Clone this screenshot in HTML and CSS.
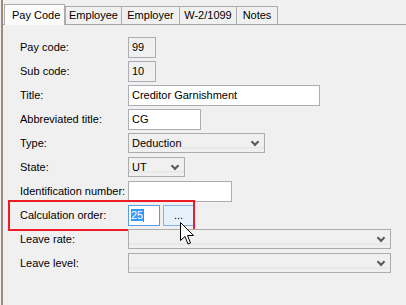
FILE: index.html
```html
<!DOCTYPE html>
<html lang="en">

<head>
    <meta charset="UTF-8">
    <title>Pay Code</title>
    <link rel="stylesheet" href="styles.css">
</head>

<body>
    <div class="window">
        <div class="tabs">
            <div class="tab active">Pay Code</div>
            <div class="tab t-employee">Employee</div>
            <div class="tab t-employer">Employer</div>
            <div class="tab t-w2">W-2/1099</div>
            <div class="tab t-notes">Notes</div>
        </div>

        <div class="panel">
            <div class="row">
                <label>Pay code:</label>
                <div class="field readonly w-small">99</div>
            </div>
            <div class="row">
                <label>Sub code:</label>
                <div class="field readonly w-small">10</div>
            </div>
            <div class="row">
                <label>Title:</label>
                <div class="field w-title">Creditor Garnishment</div>
            </div>
            <div class="row">
                <label>Abbreviated title:</label>
                <div class="field w-abbr">CG</div>
            </div>
            <div class="row">
                <label>Type:</label>
                <div class="select w-type">Deduction<span class="chevron"></span></div>
            </div>
            <div class="row">
                <label>State:</label>
                <div class="select w-state">UT<span class="chevron"></span></div>
            </div>
            <div class="row">
                <label>Identification number:</label>
                <div class="field w-id"></div>
            </div>
            <div class="row highlight-row">
                <label>Calculation order:</label>
                <div class="field focus w-calc"><span class="selected">25</span><span class="caret"></span></div>
                <button class="dots">...</button>
                <div class="highlight"></div>
                <svg class="cursor" width="15" height="24" viewBox="0 0 15 24">
                    <path d="M0.5 0.5 L0.5 18.5 L5 14.5 L8 22 L10.5 21 L7.5 13.5 L13.5 13.5 Z" fill="#fff" stroke="#000" stroke-width="1"/>
                </svg>
            </div>
            <div class="row">
                <label>Leave rate:</label>
                <div class="select w-wide"><span class="chevron"></span></div>
            </div>
            <div class="row">
                <label>Leave level:</label>
                <div class="select w-wide"><span class="chevron"></span></div>
            </div>
        </div>
    </div>
</body>

</html>
```

FILE: styles.css
```css
/* Page */
body {
    margin: 0;
    background-color: #f0f0f0;
    font-family: 'Liberation Sans', Arial, sans-serif;
    font-size: 11px;
    color: #000;
}

.window {
    height: 305px;
    margin-left: 1px;
    border-left: 2px solid #9c8a80;
    overflow: hidden;
}

/* Tabs */
.tabs {
    display: flex;
    align-items: flex-end;
    height: 24px;
    padding-left: 1px;
    border-bottom: 1px solid #a5a5a5;
    white-space: nowrap;
}

.tab {
    box-sizing: border-box;
    height: 18px;
    line-height: 17px;
    text-align: center;
    border: 1px solid #acacac;
    border-bottom: none;
    margin-left: -1px;
    background-color: #f0f0f0;
}

.t-employee { width: 57px; }
.t-employer { width: 59px; }
.t-w2 { width: 58px; }
.t-notes { width: 42px; }

.tab.active {
    position: relative;
    width: 61px;
    height: 21px;
    line-height: 20px;
    text-align: left;
    padding-left: 7px;
    margin-bottom: -1px;
    margin-left: 0;
    margin-right: 1px;
    background-color: #fcfcfc;
    z-index: 1;
}

/* Form */
.panel {
    display: flex;
    flex-direction: column;
    gap: 4px;
    padding: 12px 0 0 17px;
}

.row {
    display: flex;
    align-items: center;
    height: 20px;
    white-space: nowrap;
}

.row label {
    width: 108px;
}

.field {
    box-sizing: border-box;
    height: 21px;
    line-height: 19px;
    padding: 0 3px;
    border: 1px solid #abadb3;
    background-color: #fff;
}

.field.readonly {
    background-color: #f0f0f0;
}

.w-small { width: 28px; }
.w-title { width: 192px; }
.w-abbr { width: 73px; }
.w-id { width: 104px; }
.w-calc { width: 32px; }

.select {
    position: relative;
    box-sizing: border-box;
    height: 20px;
    line-height: 18px;
    padding: 0 3px;
    border: 1px solid #acacac;
    background: linear-gradient(#f0f0f0 70%, #e6e6e6 70%, #ebebeb 85%, #f0f0f0 85%);
}

.w-type { width: 137px; }
.w-state { width: 57px; }
.w-wide { width: 263px; }

.chevron {
    position: absolute;
    right: 6px;
    top: 5px;
    width: 4px;
    height: 4px;
    border-right: 2px solid #5a5a5a;
    border-bottom: 2px solid #5a5a5a;
    transform: rotate(45deg);
}

/* Calculation order row */
.highlight-row {
    position: relative;
}

.field.focus {
    border-color: #569de5;
    padding: 0 2px;
}

.selected {
    background-color: #3399ff;
    color: #fff;
}

.caret {
    display: inline-block;
    width: 1px;
    height: 13px;
    vertical-align: middle;
    background-color: #e06010;
}

.dots {
    box-sizing: border-box;
    width: 31px;
    height: 21px;
    margin: 0 0 0 3px;
    padding: 0;
    border: 1px solid #7eb4ea;
    background-color: #e5f1fb;
    font-family: inherit;
    font-size: 11px;
    line-height: 15px;
}

.highlight {
    position: absolute;
    left: -12px;
    top: -5px;
    width: 183px;
    height: 27px;
    border: 2px solid #ee1c24;
}

.cursor {
    position: absolute;
    left: 160px;
    top: 17px;
    z-index: 2;
}
```
